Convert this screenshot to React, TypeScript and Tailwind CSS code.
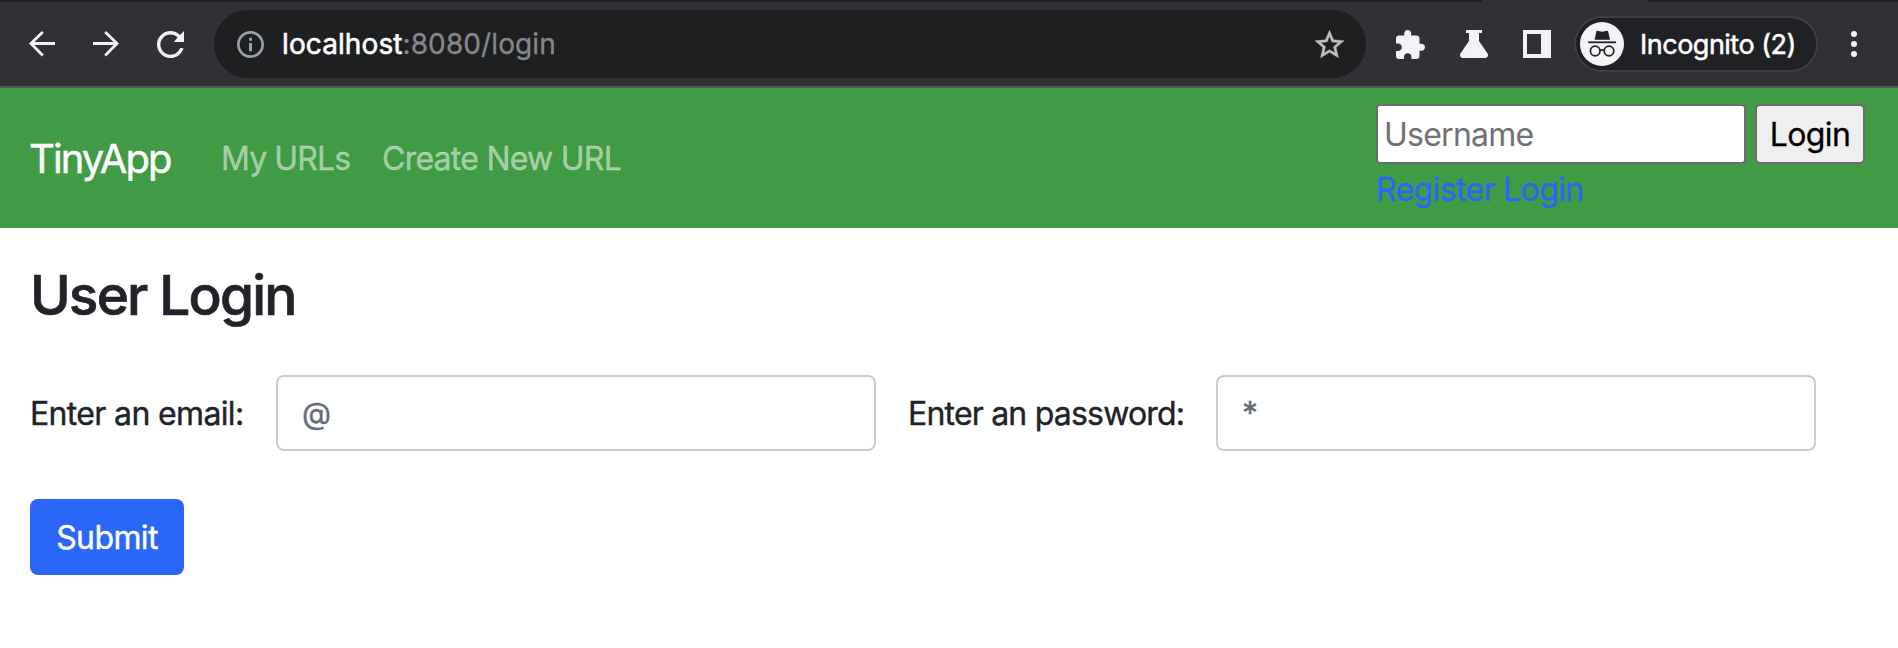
import React from "react";

const ink = "#f1f3f4";

function BackIcon() {
  return (
    <svg width="26" height="26" viewBox="0 0 26 26" fill="none" stroke={ink} strokeWidth="2.8">
      <path d="M26 12.500H2M13.800 1L2 12.500l11.800 12" />
    </svg>
  );
}

function ForwardIcon() {
  return (
    <svg width="26" height="26" viewBox="0 0 26 26" fill="none" stroke={ink} strokeWidth="2.8">
      <path d="M0 12.500h24M12.200 1L24 12.500l-11.800 12" />
    </svg>
  );
}

function ReloadIcon() {
  return (
    <svg width="27" height="27" viewBox="4 4 16 16" fill={ink}>
      <path d="M17.65 6.35C16.2 4.9 14.21 4 12 4c-4.42 0-7.99 3.58-7.99 8s3.57 8 7.99 8c3.73 0 6.84-2.55 7.73-6h-2.08c-.82 2.33-3.04 4-5.65 4-3.31 0-6-2.69-6-6s2.69-6 6-6c1.66 0 3.14.69 4.22 1.78L14 10.500h6V4l-2.35 2.35z" />
    </svg>
  );
}

function InfoIcon() {
  return (
    <svg width="27" height="27" viewBox="2 2 20 20" fill="#9aa0a6">
      <path d="M10.900 7h2.200v2.200h-2.200zm0 3.800h2.200V17h-2.200zM12 2C6.480 2 2 6.480 2 12s4.480 10 10 10 10-4.480 10-10S17.520 2 12 2zm0 18c-4.410 0-8-3.590-8-8s3.590-8 8-8 8 3.590 8 8-3.590 8-8 8z" />
    </svg>
  );
}

function StarIcon() {
  return (
    <svg width="29" height="28" viewBox="2 2 20 19" fill="#c0c0c0" stroke="#c0c0c0" strokeWidth="0.3">
      <path d="M22 9.240l-7.190-.62L12 2 9.190 8.630 2 9.240l5.460 4.730L5.820 21 12 17.270 18.180 21l-1.630-7.030L22 9.240zM12 15.400l-3.760 2.270 1-4.280-3.320-2.880 4.380-.38L12 6.100l1.710 4.040 4.380.38-3.320 2.880 1 4.280L12 15.400z" />
    </svg>
  );
}

function PuzzleIcon() {
  return (
    <svg width="29" height="29" viewBox="2 1 21 21" fill={ink}>
      <path d="M20.500 11H19V7c0-1.100-.9-2-2-2h-4V3.500C13 2.120 11.880 1 10.500 1S8 2.120 8 3.500V5H4c-1.100 0-1.990.9-1.990 2v3.800H3.500c1.490 0 2.700 1.210 2.700 2.700s-1.210 2.700-2.700 2.700H2V20c0 1.100.9 2 2 2h3.800v-1.500c0-1.490 1.210-2.700 2.700-2.700 1.490 0 2.700 1.210 2.700 2.700V22H17c1.100 0 2-.9 2-2v-4h1.500c1.380 0 2.500-1.120 2.500-2.500S21.880 11 20.500 11z" />
    </svg>
  );
}

function FlaskIcon() {
  return (
    <svg width="28" height="28" viewBox="0 0 28 28" fill={ink}>
      <path d="M6 0h16v3h-3v8l8.400 12.200c1.500 2.200.2 4.800-2.400 4.800H3c-2.600 0-3.900-2.600-2.400-4.800L9 11V3H6z" />
    </svg>
  );
}

function PanelIcon() {
  return (
    <svg width="28" height="28" viewBox="0 0 28 28" fill={ink} fillRule="evenodd">
      <path d="M0 0h28v28H0zM4 4v20h14V4z" />
    </svg>
  );
}

function IncognitoIcon() {
  return (
    <svg width="44" height="44" viewBox="0 0 44 44">
      <circle cx="22" cy="22" r="22" fill={ink} />
      <path
        d="M17.300 8.800c1.700 0 3 .9 4.900.9s3.200-.9 4.900-.9c.6 0 .9.3 1.100 1l1.900 7.900H14.600l1.700-7.900c.2-.7.400-1 1-1z"
        fill="#202124"
      />
      <path d="M8.200 20.300h27.800" stroke="#202124" strokeWidth="1.800" />
      <g fill="none" stroke="#202124" strokeWidth="1.700">
        <circle cx="15.200" cy="29" r="4.800" />
        <circle cx="29" cy="29" r="4.800" />
        <path d="M20 28.500q2.100-1.200 4.200 0" />
      </g>
    </svg>
  );
}

function MenuIcon() {
  return (
    <svg width="6" height="26" viewBox="0 0 6 26" fill={ink}>
      <circle cx="3" cy="3" r="3" />
      <circle cx="3" cy="13" r="3" />
      <circle cx="3" cy="23" r="3" />
    </svg>
  );
}

function BrowserBar() {
  return (
    <div className="h-[88px] border-b-2 border-[#56565a] bg-[#303035]">
      <div className="flex h-[2px] justify-between">
        <div className="w-[1482px] rounded-br-[2px] bg-[#202124]" />
        <div className="w-[250px] rounded-bl-[2px] bg-[#202124]" />
      </div>
      <div className="flex h-[84px] items-center">
        <div className="ml-[29px] flex w-[185px] items-center gap-[38px]">
          <BackIcon />
          <ForwardIcon />
          <ReloadIcon />
        </div>
        <div className="flex h-[68px] w-[1152px] items-center rounded-full bg-[#1e1f21] pr-[22px] pl-[23px]">
          <InfoIcon />
          <span className="ml-[18px] text-[28px] tracking-[0.1px] text-[#86878a] [-webkit-text-stroke:0.3px]">
            <span className="text-white [-webkit-text-stroke:0.6px]">localhost</span>:8080/login
          </span>
          <span className="ml-auto">
            <StarIcon />
          </span>
        </div>
        <div className="ml-[30px] flex items-center gap-[35px]">
          <PuzzleIcon />
          <FlaskIcon />
          <PanelIcon />
        </div>
        <div className="ml-[23px] flex h-14 w-[244px] items-center rounded-full border-2 border-[#3f3f43] bg-[#202124] pl-1">
          <IncognitoIcon />
          <span className="ml-4 pt-[2px] text-[27px] tracking-[-0.5px] whitespace-nowrap text-white [-webkit-text-stroke:0.5px]">
            Incognito (2)
          </span>
        </div>
        <span className="ml-[33px]">
          <MenuIcon />
        </span>
      </div>
    </div>
  );
}

function NavBar() {
  return (
    <nav className="flex h-[140px] items-center bg-[#419b45] pl-[30px]">
      <a className="-ml-px w-[192px] pt-[2px] text-[40px] tracking-[-1.9px] text-white [-webkit-text-stroke:0.4px]">
        TinyApp
      </a>
      <a className="w-[161px] pt-px text-[32px] tracking-[-0.9px] text-white/50 [-webkit-text-stroke:0.3px]">
        My URLs
      </a>
      <a className="pt-px text-[32px] tracking-[-0.75px] text-white/50 [-webkit-text-stroke:0.3px]">
        Create New URL
      </a>
      <div className="mr-[33px] ml-auto flex flex-col self-start pt-4">
        <form className="flex gap-[9px]">
          <input
            placeholder="Username"
            className="h-[60px] w-[370px] rounded-[4px] border-2 border-[#6e6b70] bg-white px-[6px] pt-px text-[32px] tracking-[-0.75px] placeholder:text-[#717171]"
          />
          <button
            type="button"
            className="h-[60px] w-[110px] rounded-[5px] border-2 border-[#6e6b70] bg-[#efefef] pt-[2px] text-[32px] tracking-[-0.6px] text-black [-webkit-text-stroke:0.3px]"
          >
            Login
          </button>
        </form>
        <div className="flex h-[50px] items-center gap-2 pt-px text-[32px] tracking-[-0.6px] text-[#2a67f8] [-webkit-text-stroke:0.3px]">
          <a>Register</a>
          <a>Login</a>
        </div>
      </div>
    </nav>
  );
}

const field =
  "h-[76px] w-[600px] rounded-[8px] border-2 border-[#c9cdd4] bg-white px-6 text-[32px] placeholder:text-[#656d75] [-webkit-text-stroke:0.4px]";

export default function App() {
  return (
    <div className="h-[648px] w-[1898px] overflow-hidden bg-white font-[Inter,'Liberation_Sans',sans-serif] text-[#212328]">
      <BrowserBar />
      <NavBar />
      <main className="pt-[33px] pl-[30px]">
        <h2 className="text-[55px] leading-[68px] font-medium tracking-[-1.85px] [-webkit-text-stroke:0.7px]">
          User Login
        </h2>
        <form className="mt-[46px] flex items-center whitespace-nowrap">
          <label className="w-[246px] pt-[2px] text-[32px] tracking-[-0.65px] [-webkit-text-stroke:0.4px]">
            Enter an email:
          </label>
          <input placeholder="@" className={`${field} pb-[2px] placeholder:text-[30px]`} />
          <label className="ml-8 w-[308px] pt-[2px] text-[32px] tracking-[-0.8px] [-webkit-text-stroke:0.4px]">
            Enter an password:
          </label>
          <input placeholder="*" className={field} />
        </form>
        <button className="mt-12 h-[76px] w-[154px] rounded-[8px] bg-[#2a67f8] pt-[2px] text-[32px] tracking-[-0.6px] text-white [-webkit-text-stroke:0.4px]">
          Submit
        </button>
      </main>
    </div>
  );
}
